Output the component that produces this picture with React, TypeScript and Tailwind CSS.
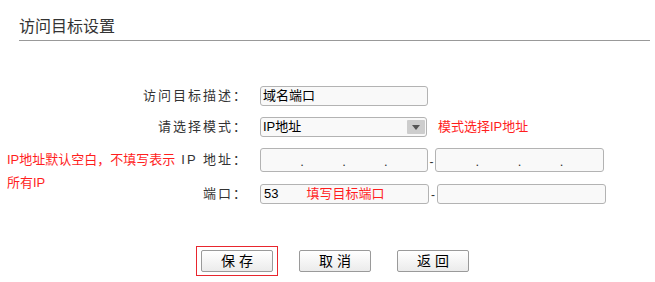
import React from "react";

const field =
  "flex items-center rounded-[3px] border border-[#b3b3b3] bg-[#f9f9f9] text-[13px] text-black";

function IpBox({ w }: { w: string }) {
  // four blank octets split by dots
  return (
    <div className={`${field} h-[24px] ${w} px-[1px]`}>
      {[0, 1, 2, 3].map((i) => (
        <React.Fragment key={i}>
          <span className="flex-1" />
          {i < 3 && <span className="text-[#333] leading-none mt-[2px]">.</span>}
        </React.Fragment>
      ))}
    </div>
  );
}

const btn =
  "block w-[72px] h-[22px] rounded-[2px] border border-[#9a9a9a] bg-linear-to-b from-white to-[#ebebeb] text-[14px] leading-none text-black";

export default function App() {
  return (
    <div className="w-[655px] h-[282px] bg-white font-['Liberation_Sans','Noto_Sans_CJK_SC',sans-serif] text-[#333]">
      {/* Header */}
      <div className="ml-[19px] mr-[5px] pt-[17px] pb-[3px] border-b border-[#999] text-[16px] leading-[20px]">
        访问目标设置
      </div>

      {/* Form */}
      <div className="mt-[45px] pl-[7px] grid grid-cols-[174px_79px_auto] gap-y-[11px] items-center">
        <div className="col-span-2 pr-[12px] text-right text-[13px] tracking-[2px] whitespace-nowrap">
          访问目标描述：
        </div>
        <div className={`${field} h-[20px] w-[168px] pl-[2px]`}>域名端口</div>

        <div className="col-span-2 pr-[12px] text-right text-[13px] tracking-[2px] whitespace-nowrap">
          请选择模式：
        </div>
        <div className="flex items-center">
          <div className={`${field} h-[20px] w-[167px] pl-[2px] pr-[1px]`}>
            <span>IP地址</span>
            <span className="ml-auto w-[18px] h-[14px] bg-[#cdcdcd] rounded-[1px] flex items-center justify-center">
              <span className="w-0 h-0 border-x-[4px] border-x-transparent border-t-[5px] border-t-[#555]" />
            </span>
          </div>
          <span className="ml-[11px] text-[13px] text-[#ff1e1e] whitespace-nowrap">模式选择IP地址</span>
        </div>

        <div className="row-span-2 self-start text-[13px] leading-[23px] text-[#ff1e1e]">
          IP地址默认空白，不填写表示
          <br />
          所有IP
        </div>
        <div className="pr-[12px] text-right text-[13px] tracking-[2px] whitespace-nowrap">IP 地址：</div>
        <div className="flex items-center">
          <IpBox w="w-[168px]" />
          <span className="w-[7px] text-center text-[12px] mt-[3px]">-</span>
          <IpBox w="w-[169px]" />
        </div>

        <div className="pr-[12px] text-right text-[13px] tracking-[2px] whitespace-nowrap">端口：</div>
        <div className="flex items-center">
          <div className={`${field} h-[20px] w-[169px] pl-[3px]`}>
            <span>53</span>
            <span className="ml-[28px] text-[#ff1e1e]">填写目标端口</span>
          </div>
          <span className="w-[8px] text-center text-[12px] mt-[3px]">-</span>
          <div className={`${field} h-[20px] w-[169px]`} />
        </div>
      </div>

      {/* Buttons */}
      <div className="mt-[46px] pl-[201px] flex items-start gap-[26px]">
        <div className="-mx-[5px] -my-[4px] border border-[#e8262e] px-[4px] py-[3px]">
          <button className={btn}>保 存</button>
        </div>
        <button className={btn}>取 消</button>
        <button className={btn}>返 回</button>
      </div>
    </div>
  );
}
